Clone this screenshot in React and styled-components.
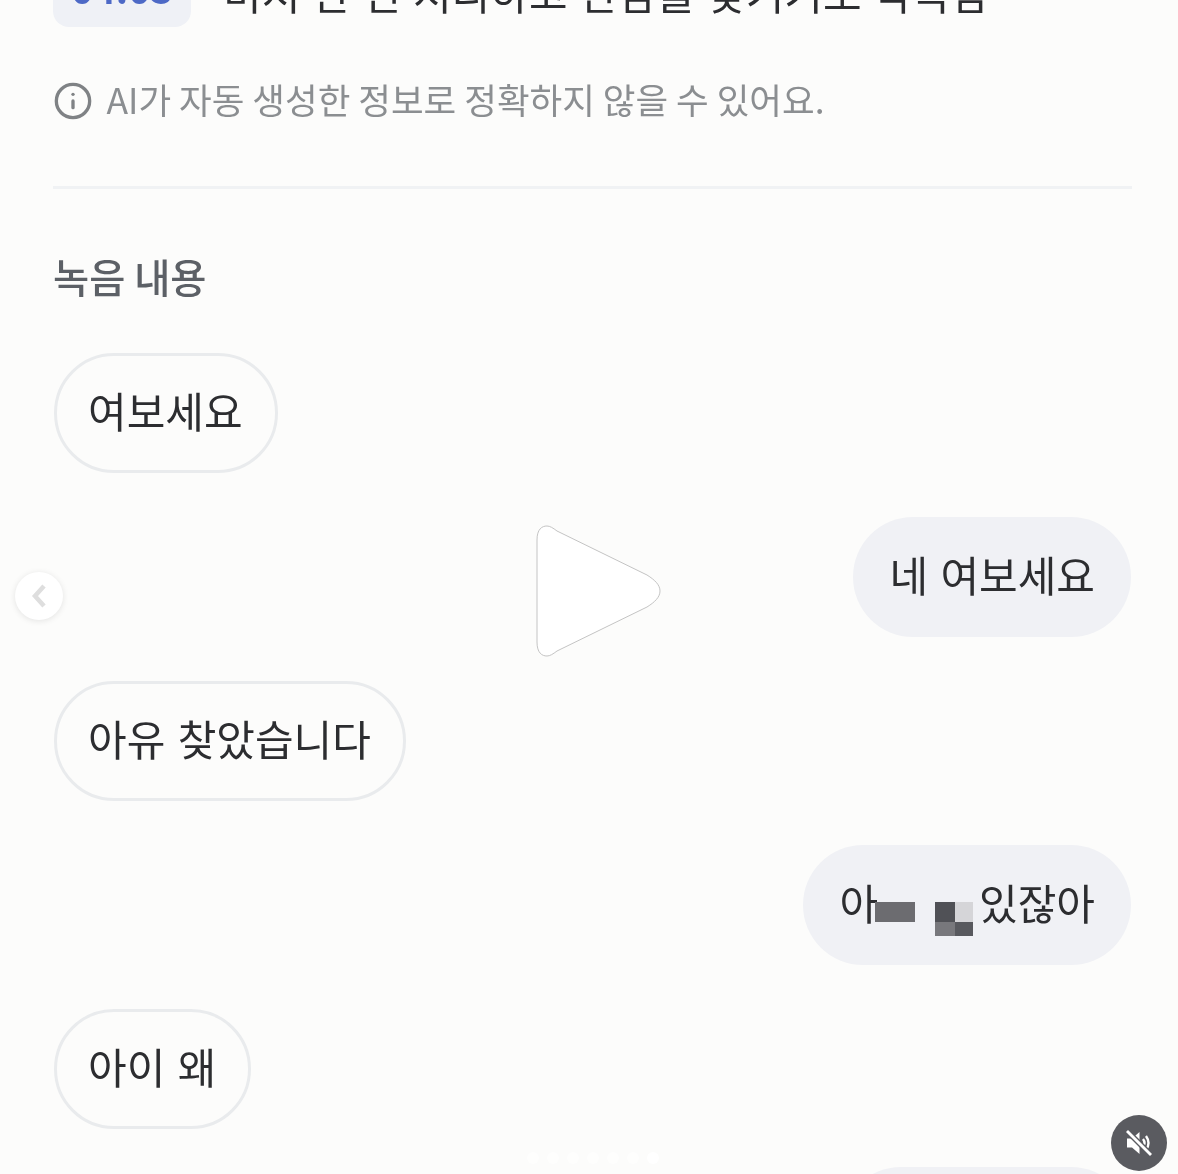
import React from 'react';
import styled, { createGlobalStyle } from 'styled-components';
import { Info } from 'lucide-react';

const Global = createGlobalStyle`
  html, body { margin: 0; padding: 0; background: #fcfcfb; }
  body { font-family: "Noto Sans CJK KR", "Noto Sans", sans-serif; }
`;

const Page = styled.main`
  position: relative;
  width: 1178px;
  height: 1174px;
  overflow: hidden;
  background: #fcfcfb;
  box-sizing: border-box;
  padding: 0 47px 0 53px;
  filter: blur(0.4px);
`;

const Summary = styled.div`
  display: flex;
  align-items: center;
  gap: 32px;
  margin-top: -37px;
  height: 64px;
`;

const TimeBadge = styled.span`
  flex: none;
  width: 138px;
  height: 64px;
  border-radius: 16px;
  background: #eff1f6;
  color: #4d69c6;
  font-size: 38px;
  font-weight: 700;
  line-height: 50px;
  text-align: center;
`;

const SummaryText = styled.span`
  font-size: 42px;
  line-height: 58px;
  margin-bottom: 6px;
  word-spacing: 2.4px;
  color: #2c2d30;
  white-space: nowrap;
`;

const Notice = styled.div`
  display: flex;
  align-items: center;
  gap: 15.5px;
  margin-top: 55px;
  padding-left: 2px;
  height: 38px;
  color: #8b8e91;
  font-size: 35.5px;
  line-height: 38px;
  white-space: nowrap;
  svg { flex: none; color: #7f8285; margin: 0 -2px; }
`;

const NoticeText = styled.span`
  padding-bottom: 4px;
`;

const Divider = styled.hr`
  margin: 66px -1px 0 0;
  border: 0;
  height: 3px;
  background: #f0f2f4;
`;

const Heading = styled.h2`
  margin: 61px 0 0;
  font-size: 39.3px;
  line-height: 52px;
  font-weight: 500;
  color: #5c6066;
`;

const Transcript = styled.div`
  display: flex;
  flex-direction: column;
  gap: 44px;
  margin-top: 51px;
`;

const Bubble = styled.div`
  display: flex;
  align-items: center;
  box-sizing: border-box;
  height: 120px;
  padding: 0 ${p => (p.$me ? '36px' : '32px')} 8px ${p => (p.$me ? '36px' : '31px')};
  border-radius: 60px;
  font-size: 42px;
  word-spacing: 3px;
  color: #2c2d30;
  white-space: nowrap;
  align-self: ${p => (p.$me ? 'flex-end' : 'flex-start')};
  background: ${p => (p.$me ? '#f0f1f5' : '#fcfcfb')};
  border: ${p => (p.$me ? '0' : '3px solid #e9ebed')};
  margin-top: ${p => (p.$late ? '-6px' : '0')};
  margin-left: ${p => (p.$me ? '0' : '1px')};
`;

const Censor = styled.span`
  flex: none;
  width: 40px;
  height: 20px;
  margin: 22px 0 0 -3px;
  background: #6c6c70;
`;

const Mosaic = styled.span`
  flex: none;
  display: grid;
  grid-template-columns: 20px 18px;
  grid-template-rows: 20px 14px;
  margin: 36px 6px 0 20px;
`;

const Tile = styled.i`
  display: block;
  background: ${p => p.$c};
`;

const PlayIcon = styled.svg`
  position: absolute;
  left: 536px;
  top: 525px;
`;

const PrevButton = styled.button`
  position: absolute;
  left: 15px;
  top: 572px;
  width: 48px;
  height: 48px;
  padding: 0;
  border: 0;
  border-radius: 50%;
  background: #ffffff;
  box-shadow: 0 1px 6px rgba(0, 0, 0, 0.1);
  display: flex;
  align-items: center;
  justify-content: center;
`;

const MuteButton = styled.button`
  position: absolute;
  left: 1111px;
  top: 1115px;
  width: 56px;
  height: 56px;
  padding: 0;
  border: 0;
  border-radius: 50%;
  background: #5a5b60;
  display: flex;
  align-items: center;
  justify-content: center;
`;

const Dots = styled.div`
  position: absolute;
  left: 527px;
  top: 1152px;
  display: flex;
  gap: 8px;
`;

const Dot = styled.span`
  width: 12px;
  height: 12px;
  border-radius: 50%;
  background: #ffffff;
  opacity: ${p => (p.$active ? 1 : 0.6)};
`;

export default function App() {
  return (
    <Page>
      <Global />
      <Summary>
        <TimeBadge>04:03</TimeBadge>
        <SummaryText>미처 한 번 처리하고 만남을 갖기기로 약속함</SummaryText>
      </Summary>
      <Notice>
        <Info size={40} strokeWidth={2} />
        <NoticeText>AI가 자동 생성한 정보로 정확하지 않을 수 있어요.</NoticeText>
      </Notice>
      <Divider />
      <Heading>녹음 내용</Heading>
      <Transcript>
        <Bubble>여보세요</Bubble>
        <Bubble $me>네 여보세요</Bubble>
        <Bubble>아유 찾았습니다</Bubble>
        <Bubble $me>
          아<Censor />
          <Mosaic>
            <Tile $c="#505156" />
            <Tile $c="#d5d5d8" />
            <Tile $c="#78787c" />
            <Tile $c="#58595e" />
          </Mosaic>
          있잖아
        </Bubble>
        <Bubble>아이 왜</Bubble>
        <Bubble $me $late>왜 그래 진짜</Bubble>
      </Transcript>

      <PlayIcon width="126" height="132" viewBox="0 0 126 132">
        <path
          d="M1 15 C1 4 6 1 11 1 C14 1 17 3 21 6 L111 50 C119 55 124 60 124 66 C124 72 119 77 111 82 L21 126 C17 129 14 131 11 131 C6 131 1 128 1 117 Z"
          fill="#ffffff"
          stroke="#c4c4c4"
          strokeWidth="1"
        />
      </PlayIcon>

      <PrevButton aria-label="이전">
        <svg width="18" height="26" viewBox="0 0 18 26">
          <path d="M14 3 L5 13 L14 23" fill="none" stroke="#dedede" strokeWidth="4.5" />
        </svg>
      </PrevButton>

      <MuteButton aria-label="음소거">
        <svg width="30" height="30" viewBox="0 0 30 30">
          <path d="M3 10.5 H8 L15.5 4 V26 L8 19.5 H3 Z" fill="#ffffff" />
          <path d="M19 11 Q22 15 19 19 M22 8 Q27 15 22 22" fill="none" stroke="#ffffff" strokeWidth="2.4" />
          <path d="M3 3 L27 27" stroke="#5a5b60" strokeWidth="5.5" />
          <path d="M3 3 L27 27" stroke="#ffffff" strokeWidth="2.8" />
        </svg>
      </MuteButton>

      <Dots>
        {[0, 1, 2, 3, 4, 5, 6].map(i => (
          <Dot key={i} $active={i === 6} />
        ))}
      </Dots>
    </Page>
  );
}
